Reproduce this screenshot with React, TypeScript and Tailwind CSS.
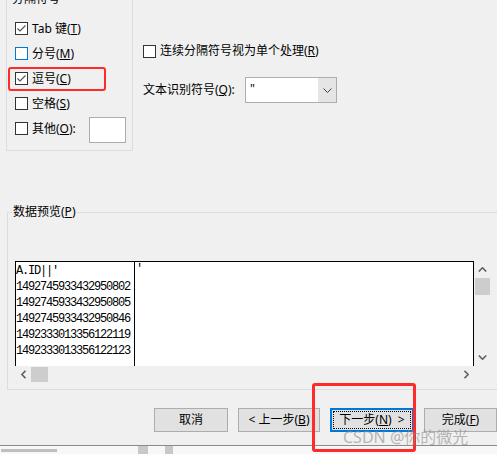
import type { ReactNode } from 'react'

function Check({ checked, hover }: { checked?: boolean; hover?: boolean }) {
  return (
    <span
      className={`flex h-[13px] w-[13px] shrink-0 items-center justify-center border bg-white ${
        hover ? 'border-[#0078d7]' : 'border-[#333333]'
      }`}
    >
      {checked && (
        <svg width="11" height="11" viewBox="0 0 11 11">
          <path d="M1.5 5.5 L4 8 L9.5 2.5" fill="none" stroke="#555" strokeWidth="1.2" />
        </svg>
      )}
    </span>
  )
}

function Row({ checked, hover, children }: { checked?: boolean; hover?: boolean; children: ReactNode }) {
  return (
    <div className="flex h-[25px] items-center">
      <Check checked={checked} hover={hover} />
      <span className="ml-[4px] whitespace-nowrap">{children}</span>
    </div>
  )
}

function Btn({ children, focus, w }: { children: ReactNode; focus?: boolean; w: string }) {
  if (focus)
    return (
      <div className={`flex h-[24px] ${w} border-2 border-[#0078d7] bg-[#e1e1e1] p-[1px]`}>
        <div className="flex flex-1 items-center justify-center border border-dotted border-black">{children}</div>
      </div>
    )
  return <div className={`flex h-[24px] ${w} items-center justify-center border border-[#adadad] bg-[#e1e1e1]`}>{children}</div>
}

const rows = ["A.ID||'", '1492745933432950802', '1492745933432950805', '1492745933432950846', '1492333013356122119', '1492333013356122123']

function App() {
  return (
    <div className="relative h-[454px] w-[497px] overflow-hidden bg-[#f0f0f0] font-['Noto_Sans','Noto_Sans_CJK_SC',sans-serif] text-[12px] leading-[16px] text-black">
      <div className="flex h-[446px] flex-col border-b border-[#8a8a8a]">
        {/* top: delimiters */}
        <div className="flex items-start">
          <div className="relative ml-[6px] mt-[-1px] h-[152px] w-[127px] border border-[#dcdcdc] pl-[8px] pt-[16px]">
            <span className="absolute left-[4px] top-[-9px] bg-[#f0f0f0] px-[1px]">分隔符号</span>
            <Row checked>
              Tab 键(<u>T</u>)
            </Row>
            <Row hover>
              分号(<u>M</u>)
            </Row>
            <Row checked>
              逗号(<u>C</u>)
            </Row>
            <Row>
              空格(<u>S</u>)
            </Row>
            <div className="flex h-[25px] items-center pr-[6px]">
              <Check />
              <span className="ml-[4px] whitespace-nowrap">
                其他(<u>O</u>):
              </span>
              <div className="ml-auto mt-[3px] h-[26px] w-[37px] border border-[#adadad] bg-white" />
            </div>
          </div>

          <div className="ml-[10px] flex flex-col">
            <div className="mt-[44px] flex h-[14px] items-center">
              <Check />
              <span className="ml-[4px] whitespace-nowrap">
                连续分隔符号视为单个处理(<u>R</u>)
              </span>
            </div>
            <div className="mt-[19px] flex h-[26px] items-center">
              <span className="w-[102px] whitespace-nowrap">
                文本识别符号(<u>Q</u>):
              </span>
              <div className="flex h-[26px] w-[92px] border border-[#adadad] bg-white">
                <span className="flex-1 pl-[4px] pt-[3px] text-[12px]">"</span>
                <div className="flex w-[18px] items-center justify-center bg-[#e5e5e5]">
                  <svg width="9" height="5" viewBox="0 0 9 5">
                    <path d="M0.5 0.5 L4.5 4.5 L8.5 0.5" fill="none" stroke="#404040" strokeWidth="1" />
                  </svg>
                </div>
              </div>
            </div>
          </div>
        </div>

        {/* preview group */}
        <div className="relative ml-[7px] mt-[61px] h-[178px] w-[520px] shrink-0 border border-[#dcdcdc] pl-[7px] pt-[48px]">
          <span className="absolute left-[4px] top-[-9px] bg-[#f0f0f0] px-[1px]">
            数据预览(<u>P</u>)
          </span>
          <div className="flex">
            <div className="flex h-[105px] w-[459px] border-l border-r border-t border-black bg-white">
              <div className="w-[119px] border-r border-black pt-[1px] font-['Liberation_Mono',monospace] text-[12px] leading-[16px] tracking-[-1.2px]">
                {rows.map(r => (
                  <div key={r} className="whitespace-nowrap">
                    {r}
                  </div>
                ))}
              </div>
              <div className="pl-[1px] font-['Liberation_Mono',monospace] text-[12px] leading-[14px]">'</div>
            </div>
            <div className="flex h-[105px] w-[17px] flex-col">
              <div className="flex h-[17px] items-center justify-center">
                <svg width="9" height="5" viewBox="0 0 9 5">
                  <path d="M0.8 4.5 L4.5 0.8 L8.2 4.5" fill="none" stroke="#606060" strokeWidth="1.6" />
                </svg>
              </div>
              <div className="mx-auto h-[17px] w-[15px] bg-[#cdcdcd]" />
              <div className="flex-1" />
              <div className="flex h-[17px] items-center justify-center">
                <svg width="9" height="5" viewBox="0 0 9 5">
                  <path d="M0.8 0.5 L4.5 4.2 L8.2 0.5" fill="none" stroke="#606060" strokeWidth="1.6" />
                </svg>
              </div>
            </div>
          </div>
          <div className="flex h-[16px] w-[459px] items-center">
            <div className="flex w-[16px] items-center justify-center">
              <svg width="5" height="9" viewBox="0 0 5 9">
                <path d="M4.5 0.8 L0.8 4.5 L4.5 8.2" fill="none" stroke="#606060" strokeWidth="1.6" />
              </svg>
            </div>
            <div className="h-[15px] w-[17px] bg-[#cdcdcd]" />
            <div className="flex-1" />
            <div className="flex w-[16px] items-center justify-center">
              <svg width="5" height="9" viewBox="0 0 5 9">
                <path d="M0.5 0.8 L4.2 4.5 L0.5 8.2" fill="none" stroke="#606060" strokeWidth="1.6" />
              </svg>
            </div>
          </div>
        </div>

        {/* buttons */}
        <div className="ml-[154px] mt-[18px] flex gap-[10px]">
          <Btn w="w-[74px]">取消</Btn>
          <Btn w="w-[82px]">
            &lt; 上一步(<u>B</u>)
          </Btn>
          <Btn w="w-[84px]" focus>
            下一步(<u>N</u>)&nbsp;&nbsp;&gt;
          </Btn>
          <Btn w="w-[73px]">
            完成(<u>F</u>)
          </Btn>
        </div>
      </div>

      {/* strip behind the dialog */}
      <div className="flex h-[8px] items-center bg-[#f7f7f7]">
        <div className="ml-[1px] h-[3px] w-[56px] bg-[#9a9a9a]/60" />
        <div className="ml-[81px] h-[8px] w-[10px] bg-[#c8c8c8]" />
        <div className="ml-[17px] h-[8px] w-[8px] bg-[#c8c8c8]" />
      </div>

      {/* annotations */}
      <div className="absolute left-[8px] top-[67px] h-[24px] w-[98px] rounded-[3px] border-2 border-[#ff2b2b]" />
      <div className="absolute left-[312px] top-[383px] h-[69px] w-[104px] rounded-[3px] border-[3px] border-[#ff2b2b]" />
      <div className="absolute left-[343px] top-[427px] whitespace-nowrap text-[16px] leading-[20px] text-[#8a8a8a]/60">
        CSDN @你的微光
      </div>
    </div>
  )
}

export default App
